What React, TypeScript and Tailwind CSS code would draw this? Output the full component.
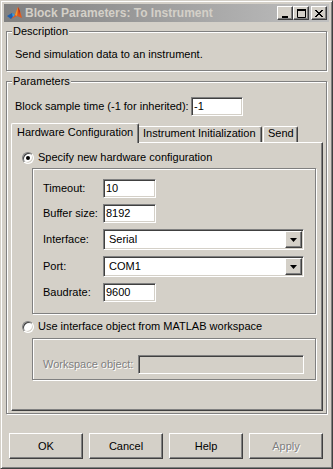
import React from "react";

const sunken =
  "border border-t-[#808080] border-l-[#808080] border-b-white border-r-white shadow-[inset_1px_1px_0_#404040,inset_-1px_-1px_0_#d4d0c8]";
const raised =
  "border border-t-white border-l-white border-b-[#404040] border-r-[#404040] shadow-[inset_-1px_-1px_0_#808080]";
const etched = "border border-[#808080] shadow-[1px_1px_0_#fff,inset_1px_1px_0_#fff]";

function Radio({ checked }: { checked?: boolean }) {
  return (
    <div className="w-[12px] h-[12px] rounded-full bg-white border border-t-[#808080] border-l-[#808080] border-b-white border-r-white shadow-[inset_1px_1px_0_#404040,inset_-1px_-1px_0_#d4d0c8] flex items-center justify-center shrink-0">
      {checked && <div className="w-[4px] h-[4px] rounded-full bg-black" />}
    </div>
  );
}

function TextBox({ value, w }: { value: string; w: string }) {
  return (
    <div className={`${w} h-[19px] bg-white ${sunken} flex items-center pl-[2px] text-black`}>{value}</div>
  );
}

function Select({ value }: { value: string }) {
  return (
    <div className={`w-[201px] h-[21px] bg-white ${sunken} flex items-center justify-between pl-[5px] pr-[1px]`}>
      <span>{value}</span>
      <div className={`w-[17px] h-[17px] bg-[#d4d0c8] ${raised} flex items-center justify-center`}>
        <svg width="7" height="4" viewBox="0 0 7 4">
          <path d="M0 0H7L3.5 4Z" fill="#000" />
        </svg>
      </div>
    </div>
  );
}

function Row({ label, children }: { label: string; children: React.ReactNode }) {
  return (
    <div className="flex items-center">
      <div className="w-[60px]">{label}</div>
      {children}
    </div>
  );
}

function Btn({ label, disabled }: { label: string; disabled?: boolean }) {
  return (
    <div
      className={`w-[74px] h-[26px] bg-[#d4d0c8] ${raised} flex items-center justify-center ${
        disabled ? "text-[#808080] [text-shadow:1px_1px_0_#fff]" : "text-black"
      }`}
    >
      {label}
    </div>
  );
}

function TitleBtn({ children, className }: { children: React.ReactNode; className?: string }) {
  return (
    <div className={`w-[16px] h-[14px] bg-[#d4d0c8] ${raised} flex items-center justify-center ${className ?? ""}`}>
      {children}
    </div>
  );
}

export default function App() {
  return (
    <div className="w-[333px] h-[469px] bg-[#d4d0c8] border border-t-[#d4d0c8] border-l-[#d4d0c8] border-b-[#404040] border-r-[#404040] shadow-[inset_1px_1px_0_#fff,inset_-1px_-1px_0_#808080] p-[3px] font-['Liberation_Sans',Arial,sans-serif] text-[11px] leading-[13px] text-black overflow-hidden">
      {/* Title bar */}
      <div className="h-[18px] bg-gradient-to-r from-[#808080] to-[#c0c0c0] flex items-center pl-[3px] pr-[2px]">
        <svg width="15" height="14" viewBox="0 0 15 14" className="shrink-0">
          <path d="M0 10 L5 7 L8 9 L4 13 Z" fill="#1d5fb0" />
          <path d="M5 7 L8 9 L6 12 Z" fill="#3fa0e0" />
          <path d="M4 13 L8 9 L11 1 L13 5 L15 12 L10 10 Z" fill="#e2581c" />
          <path d="M8 9 L11 1 L10 10 Z" fill="#f49a2c" />
          <path d="M11 1 L13 5 L12 9 Z" fill="#b8321a" />
        </svg>
        <span className="ml-[3px] font-bold text-[#d4d0c8] whitespace-nowrap text-[12px]">
          Block Parameters: To Instrument
        </span>
        <div className="ml-auto flex items-center">
          <TitleBtn>
            <svg width="8" height="9" viewBox="0 0 8 9">
              <rect x="1" y="7" width="6" height="2" fill="#000" />
            </svg>
          </TitleBtn>
          <TitleBtn>
            <svg width="9" height="9" viewBox="0 0 9 9">
              <path d="M0.5 1.5H8.5V8.5H0.5Z" fill="none" stroke="#000" />
              <rect x="0" y="0" width="9" height="2" fill="#000" />
            </svg>
          </TitleBtn>
          <TitleBtn className="ml-[2px]">
            <svg width="8" height="7" viewBox="0 0 8 7">
              <path d="M0 0L7 7M1 0L8 7M7 0L0 7M8 0L1 7" stroke="#000" strokeWidth="1" />
            </svg>
          </TitleBtn>
        </div>
      </div>

      <div className="px-[2px]">
        {/* Description */}
        <div className={`relative mt-[9px] h-[40px] ${etched} pt-[16px] pl-[8px]`}>
          <span className="absolute left-[5px] top-[-7px] px-[1px] bg-[#d4d0c8]">Description</span>
          <div>Send simulation data to an instrument.</div>
        </div>

        {/* Parameters */}
        <div className={`relative mt-[10px] h-[333px] ${etched}`}>
          <span className="absolute left-[5px] top-[-7px] px-[1px] bg-[#d4d0c8]">Parameters</span>
          <div className="pt-[15px] pl-[8px] flex items-center">
            <div className="w-[176px]">Block sample time (-1 for inherited):</div>
            <TextBox value="-1" w="w-[52px]" />
          </div>

          {/* Tabs */}
          <div className="mt-[7px] pl-[4px]">
            <div className="flex items-end h-[19px]">
              <div className="relative z-10 w-[128px] h-[20px] -mb-[1px] bg-[#d4d0c8] border-t border-l border-r border-t-white border-l-white border-r-[#404040] shadow-[inset_-1px_0_0_#808080] rounded-t-[2px] pl-[5px] pt-[2px]">
                Hardware Configuration
              </div>
              <div className="w-[123px] h-[16px] bg-[#d4d0c8] border-t border-r border-t-white border-r-[#404040] shadow-[inset_-1px_0_0_#808080] rounded-tr-[2px] pl-[4px] pt-[0px]">
                Instrument Initialization
              </div>
              <div className="ml-[1px] w-[35px] h-[16px] bg-[#d4d0c8] border-t border-l border-r border-t-white border-l-white border-r-[#404040] shadow-[inset_-1px_0_0_#808080] rounded-t-[2px] pl-[4px]">
                Send
              </div>
            </div>
            <div className={`w-[312px] h-[269px] bg-[#d4d0c8] ${raised}`}>
              <div className="pt-[8px] pl-[10px] flex items-center gap-[4px]">
                <Radio checked />
                <span>Specify new hardware configuration</span>
              </div>
              <div className={`ml-[20px] mt-[4px] w-[284px] h-[146px] ${etched} pt-[10px] pl-[10px] flex flex-col gap-[6px]`}>
                <Row label="Timeout:">
                  <TextBox value="10" w="w-[53px]" />
                </Row>
                <Row label="Buffer size:">
                  <TextBox value="8192" w="w-[53px]" />
                </Row>
                <Row label="Interface:">
                  <Select value="Serial" />
                </Row>
                <Row label="Port:">
                  <Select value="COM1" />
                </Row>
                <Row label="Baudrate:">
                  <TextBox value="9600" w="w-[53px]" />
                </Row>
              </div>
              <div className="mt-[6px] pl-[10px] flex items-center gap-[4px]">
                <Radio />
                <span>Use interface object from MATLAB workspace</span>
              </div>
              <div className={`ml-[20px] mt-[5px] w-[284px] h-[42px] ${etched} pt-[10px] pl-[10px] flex items-center`}>
                <div className="w-[95px] text-[#808080] [text-shadow:1px_1px_0_#fff] self-center">
                  Workspace object:
                </div>
                <div className={`w-[166px] h-[19px] bg-[#d4d0c8] ${sunken}`} />
              </div>
            </div>
          </div>
        </div>
      </div>

      {/* Buttons */}
      <div className="mt-[19px] pl-[5px] flex gap-[6px]">
        <Btn label="OK" />
        <Btn label="Cancel" />
        <Btn label="Help" />
        <Btn label="Apply" disabled />
      </div>
    </div>
  );
}
